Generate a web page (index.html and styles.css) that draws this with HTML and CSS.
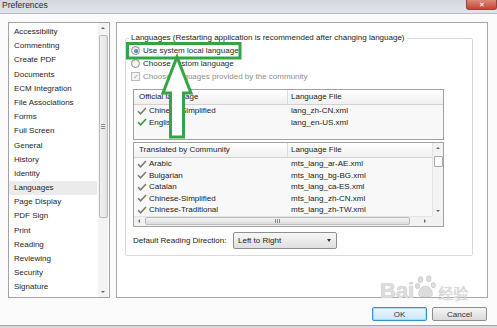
FILE: index.html
```html
<!DOCTYPE html>
<html lang="en">
<head>
    <meta charset="UTF-8">
    <title>Preferences</title>
    <link rel="stylesheet" href="styles.css">
</head>
<body>
    <div class="window">
        <div class="titlebar">
            <span class="title">Preferences</span>
            <span class="close">✕</span>
        </div>

        <div class="content">
            <div class="sidebar">
                <ul class="categories">
                    <li>Accessibility</li>
                    <li>Commenting</li>
                    <li>Create PDF</li>
                    <li>Documents</li>
                    <li>ECM Integration</li>
                    <li>File Associations</li>
                    <li>Forms</li>
                    <li>Full Screen</li>
                    <li>General</li>
                    <li>History</li>
                    <li>Identity</li>
                    <li class="active">Languages</li>
                    <li>Page Display</li>
                    <li>PDF Sign</li>
                    <li>Print</li>
                    <li>Reading</li>
                    <li>Reviewing</li>
                    <li>Security</li>
                    <li>Signature</li>
                </ul>
                <div class="vscroll">
                    <span class="arrow up"></span>
                    <span class="thumb"></span>
                    <span class="spacer"></span>
                    <span class="arrow down"></span>
                </div>
            </div>

            <div class="panel">
                <fieldset class="group">
                    <legend>Languages (Restarting application is recommended after changing language)</legend>
                    <div class="option"><span class="radio checked"></span>Use system local language</div>
                    <div class="option"><span class="radio"></span>Choose custom language</div>
                    <div class="option disabled"><span class="checkbox">✓</span>Choose languages provided by the community</div>

                    <div class="table official">
                        <div class="thead">
                            <span>Official language</span>
                            <span class="col-file">Language File</span>
                        </div>
                        <div class="row">
                            <span class="name"><svg class="check" viewBox="0 0 10 8"><path d="M1 4.2 L3.6 6.8 L9 1"/></svg>Chinese-Simplified</span>
                            <span class="file">lang_zh-CN.xml</span>
                        </div>
                        <div class="row">
                            <span class="name"><svg class="check green" viewBox="0 0 10 8"><path d="M1 4.2 L3.6 6.8 L9 1"/></svg>English</span>
                            <span class="file">lang_en-US.xml</span>
                        </div>
                    </div>

                    <div class="table community">
                        <div class="list">
                            <div class="thead">
                                <span>Translated by Community</span>
                                <span class="col-file">Language File</span>
                            </div>
                            <div class="row">
                                <span class="name"><svg class="check" viewBox="0 0 10 8"><path d="M1 4.2 L3.6 6.8 L9 1"/></svg>Arabic</span>
                                <span class="file">mts_lang_ar-AE.xml</span>
                            </div>
                            <div class="row">
                                <span class="name"><svg class="check" viewBox="0 0 10 8"><path d="M1 4.2 L3.6 6.8 L9 1"/></svg>Bulgarian</span>
                                <span class="file">mts_lang_bg-BG.xml</span>
                            </div>
                            <div class="row">
                                <span class="name"><svg class="check" viewBox="0 0 10 8"><path d="M1 4.2 L3.6 6.8 L9 1"/></svg>Catalan</span>
                                <span class="file">mts_lang_ca-ES.xml</span>
                            </div>
                            <div class="row">
                                <span class="name"><svg class="check" viewBox="0 0 10 8"><path d="M1 4.2 L3.6 6.8 L9 1"/></svg>Chinese-Simplified</span>
                                <span class="file">mts_lang_zh-CN.xml</span>
                            </div>
                            <div class="row">
                                <span class="name"><svg class="check" viewBox="0 0 10 8"><path d="M1 4.2 L3.6 6.8 L9 1"/></svg>Chinese-Traditional</span>
                                <span class="file">mts_lang_zh-TW.xml</span>
                            </div>
                        </div>
                        <div class="vscroll small">
                            <span class="arrow up"></span>
                            <span class="thumb"></span>
                            <span class="spacer"></span>
                            <span class="arrow down"></span>
                        </div>
                        <div class="hscroll">
                            <span class="arrow left"></span>
                            <span class="thumb"></span>
                            <span class="spacer"></span>
                            <span class="arrow right"></span>
                        </div>
                        <div class="corner"></div>
                    </div>

                    <div class="reading">
                        <span class="reading-label">Default Reading Direction:</span>
                        <div class="select">Left to Right<span class="caret"></span></div>
                    </div>
                </fieldset>
            </div>
        </div>

        <div class="footer">
            <button class="btn ok">OK</button>
            <button class="btn">Cancel</button>
        </div>

        <!-- green annotation drawn on top of the dialog -->
        <svg class="annotation" viewBox="0 0 497 328">
            <rect x="127.5" y="43.5" width="112.5" height="14.5" />
            <path d="M177 57 L191 93 L183.5 93 L183.5 137 L170.5 137 L170.5 93 L163 93 Z" />
        </svg>

        <div class="watermark">
            <span class="wm-latin">Bai</span>
            <svg class="paw" viewBox="0 0 24 26">
                <ellipse cx="6" cy="5" rx="2.6" ry="3.4"/>
                <ellipse cx="15" cy="4" rx="2.6" ry="3.4"/>
                <ellipse cx="2.8" cy="12" rx="2.4" ry="3"/>
                <ellipse cx="20" cy="11" rx="2.4" ry="3"/>
                <path d="M4 21 C4 15 8 12 11.5 12 C15 12 19 15 19 21 C19 24 15 24 11.5 23 C8 24 4 24 4 21 Z"/>
            </svg>
            <span class="wm-cjk">经验</span>
        </div>
    </div>
</body>
</html>
```

FILE: styles.css
```css
* {
    box-sizing: border-box;
}
body {
    margin: 0;
    font-family: "Liberation Sans", Arial, sans-serif;
    font-size: 8px;
    color: #222;
    background-color: #d9d9d9;
}
.window {
    position: relative;
    width: 497px;
    height: 326px;
    background-color: #fbfbfb;
    overflow: hidden;
}

/* title bar */
.titlebar {
    height: 14px;
    display: flex;
    justify-content: space-between;
    align-items: flex-start;
    padding-left: 2px;
    background: linear-gradient(#d2d8df, #e1e5ea);
    border-bottom: 1px solid #b6bcc3;
}
.title {
    font-size: 8.5px;
    line-height: 10px;
    color: #2a2a2a;
}
.close {
    width: 31px;
    height: 10px;
    font-size: 7px;
    line-height: 9px;
    text-align: center;
    color: #fff;
    background: linear-gradient(#dc8a79, #c4452f);
    border: 1px solid #93463b;
    border-top: none;
    border-radius: 0 0 3px 3px;
}

/* main area */
.content {
    display: flex;
    gap: 6px;
    height: 284px;
    padding: 8px 9px 0 8px;
}
.sidebar {
    display: flex;
    width: 102px;
    border: 1px solid #a3a3a3;
    background-color: #fff;
}
.categories {
    flex: 1;
    list-style: none;
    margin: 0;
    padding: 2px 1px 0 0;
}
.categories li {
    height: 14.2px;
    line-height: 14.2px;
    padding-left: 5px;
    white-space: nowrap;
    color: #1e1e1e;
}
.categories li.active {
    background-color: #ebebeb;
}

/* scrollbars */
.vscroll {
    display: flex;
    flex-direction: column;
    align-items: center;
    width: 10px;
    margin-right: 1px;
    background-color: #f3f3f3;
}
.vscroll .thumb {
    width: 9px;
    height: 183px;
    margin-top: 2px;
    border: 1px solid #b9b9b9;
    border-radius: 2px;
    background: linear-gradient(90deg, #f2f2f2, #e2e2e2);
    display: flex;
    align-items: center;
    justify-content: center;
}
.vscroll .thumb::after {
    content: "";
    width: 4px;
    height: 5px;
    background: repeating-linear-gradient(#8a8a8a 0 1px, transparent 1px 2px);
}
.spacer {
    flex: 1;
}
.arrow {
    display: flex;
    align-items: center;
    justify-content: center;
    width: 10px;
    height: 10px;
    flex: none;
}
.arrow::after {
    content: "";
    border: 2px solid transparent;
}
.arrow.up::after {
    border-bottom: 2px solid #666;
    margin-top: -2px;
}
.arrow.down::after {
    border-top: 2px solid #666;
    margin-top: 2px;
}
.arrow.left::after {
    border-right: 2px solid #666;
    margin-left: -2px;
}
.arrow.right::after {
    border-left: 2px solid #666;
    margin-left: 2px;
}

/* right panel */
.panel {
    width: 372px;
    padding: 10px 14px 0 8px;
    border: 1px solid #a8a8a8;
    background-color: #fff;
}
.group {
    width: 348px;
    margin: 0;
    padding: 1px 5px 6px 5px;
    border: 1px solid #d9d9d9;
    border-radius: 2px;
}
.group legend {
    padding: 0 2px;
    margin-left: -2px;
    line-height: 10px;
    color: #222;
}
.option {
    display: flex;
    align-items: center;
    gap: 3px;
    height: 13px;
    color: #2a2a2a;
}
.option.disabled {
    color: #8e8e8e;
}
.radio {
    width: 9px;
    height: 9px;
    border: 1px solid #8b8b8b;
    border-radius: 50%;
    background: linear-gradient(#e6e6e6, #fdfdfd);
    display: flex;
    align-items: center;
    justify-content: center;
}
.radio.checked::after {
    content: "";
    width: 4px;
    height: 4px;
    border-radius: 50%;
    background: radial-gradient(circle at 40% 40%, #6fa6e0, #1c4f95);
}
.checkbox {
    width: 9px;
    height: 9px;
    border: 1px solid #b9b9b9;
    background-color: #f4f4f4;
    font-size: 7px;
    line-height: 7px;
    text-align: center;
    color: #a8a8a8;
}

/* language tables */
.table {
    width: 311px;
    margin-left: 2px;
    border: 1px solid #a2a2a2;
    background-color: #f8f8f8;
}
.official {
    height: 51px;
    margin-top: 6px;
}
.community {
    display: grid;
    grid-template-columns: 1fr 11px;
    grid-template-rows: auto 10px;
    margin-top: 2px;
}
.thead {
    display: grid;
    grid-template-columns: 153px 1fr;
    align-items: center;
    height: 15px;
    border-bottom: 1px solid #d2d2d2;
    background: linear-gradient(#ffffff, #f0f0f0);
}
.thead span {
    padding-left: 5px;
    line-height: 14px;
}
.thead .col-file {
    padding-left: 3px;
    border-left: 1px solid #dcdcdc;
}
.row {
    display: grid;
    grid-template-columns: 153px 1fr;
    align-items: center;
    height: 11.5px;
}
.name {
    display: flex;
    align-items: center;
    gap: 2px;
    padding-left: 3px;
    white-space: nowrap;
}
.file {
    padding-left: 4px;
    white-space: nowrap;
}
.check {
    width: 10px;
    height: 8px;
    fill: none;
    stroke: #7b7b7b;
    stroke-width: 1.6;
}
.check.green {
    stroke: #3d9a38;
}
.vscroll.small {
    width: 11px;
    margin: 0;
    border-left: 1px solid #e2e2e2;
}
.vscroll.small .thumb {
    height: 11px;
    margin-top: 3px;
    background: #fdfdfd;
    border-color: #a9a9a9;
    border-radius: 1px;
}
.vscroll.small .thumb::after {
    display: none;
}
.hscroll {
    display: flex;
    align-items: center;
    background-color: #f1f1f1;
    border-top: 1px solid #e4e4e4;
}
.hscroll .thumb {
    width: 265px;
    height: 8px;
    margin-left: 1px;
    border: 1px solid #bcbcbc;
    border-radius: 2px;
    background: linear-gradient(#f4f4f4, #dcdcdc);
    display: flex;
    align-items: center;
    justify-content: center;
}
.hscroll .thumb::after {
    content: "";
    width: 5px;
    height: 4px;
    background: repeating-linear-gradient(90deg, #8a8a8a 0 1px, transparent 1px 2px);
}
.hscroll .arrow.right {
    margin-right: 2px;
}
.corner {
    background-color: #f1f1f1;
}

/* reading direction */
.reading {
    display: flex;
    align-items: center;
    height: 17px;
    margin: 5px 0 0 2px;
}
.reading-label {
    width: 100px;
    white-space: nowrap;
}
.select {
    display: flex;
    align-items: center;
    justify-content: space-between;
    width: 104px;
    height: 17px;
    padding: 0 5px 0 4px;
    border: 1px solid #8f8f8f;
    border-radius: 2px;
    background: linear-gradient(#f7f7f7, #dfdfdf);
}
.caret {
    border: 2.5px solid transparent;
    border-top: 3px solid #333;
    margin-top: 3px;
}

/* buttons */
.footer {
    display: flex;
    justify-content: flex-end;
    gap: 5px;
    height: 28px;
    padding: 9px 10px 0 0;
    border-bottom: 1px solid #a4a4a4;
}
.btn {
    width: 55px;
    height: 14px;
    padding: 0;
    font-family: inherit;
    font-size: 8px;
    color: #333;
    border: 1px solid #8e8e8e;
    border-radius: 2px;
    background: linear-gradient(#f5f5f5, #dadada);
}
.btn.ok {
    border-color: #3c8fc9;
    background: linear-gradient(#eef8fe, #c6e7f8);
    box-shadow: inset 0 0 0 1px #a9ddf6;
}

/* overlays */
.annotation {
    position: absolute;
    top: 0;
    left: 0;
    width: 497px;
    height: 328px;
    pointer-events: none;
}
.annotation rect {
    fill: none;
    stroke: #33a546;
    stroke-width: 3;
}
.annotation path {
    fill: #fff;
    stroke: #33a546;
    stroke-width: 3;
    stroke-linejoin: miter;
}
.watermark {
    position: absolute;
    left: 380px;
    top: 275px;
    display: flex;
    align-items: flex-end;
    gap: 1px;
    color: #dcdcdc;
    pointer-events: none;
}
.wm-latin {
    font-size: 22px;
    font-weight: bold;
    line-height: 28px;
    text-shadow: 0 0 1px #b8b8b8;
}
.paw {
    width: 22px;
    height: 24px;
    fill: #dcdcdc;
    stroke: #c2c2c2;
    stroke-width: 0.6;
    margin-bottom: 6px;
}
.wm-cjk {
    font-family: "Noto Sans CJK SC", sans-serif;
    font-size: 15px;
    line-height: 24px;
    text-shadow: 0 0 1px #b8b8b8;
}
```
